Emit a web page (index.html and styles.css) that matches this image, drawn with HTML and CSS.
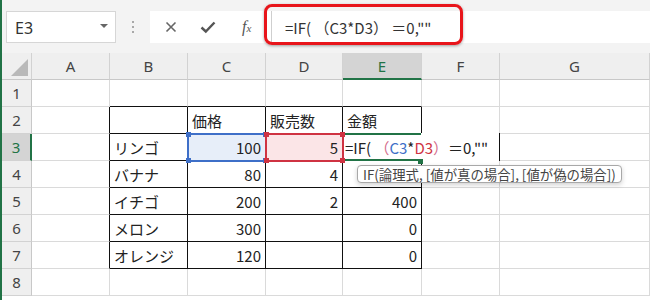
FILE: index.html
```html
<html>
<head>
	<title>IF関数</title>
	<link rel="stylesheet" href="styles.css">
</head>
<body>
	<div class="app">
		<div class="toolbar">
			<div class="namebox"><span>E3</span><i class="caret"></i></div>
			<div class="grip"><i></i><i></i><i></i></div>
			<div class="fxbar">
				<div class="fxbtns">
					<svg class="ico" width="14" height="14" viewBox="0 0 14 14"><path d="M2.5 2.5 L11.5 11.5 M11.5 2.5 L2.5 11.5" stroke="#666" stroke-width="1.6" fill="none"/></svg>
					<svg class="ico" width="16" height="14" viewBox="0 0 16 14"><path d="M1.5 7.5 L5.8 11.5 L14.5 2.5" stroke="#555" stroke-width="2.4" fill="none"/></svg>
					<span class="fx">f<span>x</span></span>
				</div>
				<div class="formula">
					<span class="mark"></span>
					<span class="ftext">=IF( （C3*D3） ＝0,""</span>
				</div>
			</div>
		</div>

		<div class="sheet">
			<div class="hd corner"><i></i></div>
			<div class="hd">A</div>
			<div class="hd">B</div>
			<div class="hd">C</div>
			<div class="hd">D</div>
			<div class="hd sel-col">E</div>
			<div class="hd">F</div>
			<div class="hd">G</div>

			<div class="rh">1</div>
			<div class="c"></div>
			<div class="c bb"></div>
			<div class="c bb"></div>
			<div class="c bb"></div>
			<div class="c bb"></div>
			<div class="c"></div>
			<div class="c"></div>

			<div class="rh">2</div>
			<div class="c br"></div>
			<div class="c bx"></div>
			<div class="c bx">価格</div>
			<div class="c bx">販売数</div>
			<div class="c bx">金額</div>
			<div class="c"></div>
			<div class="c"></div>

			<div class="rh sel-row">3</div>
			<div class="c br"></div>
			<div class="c bx">リンゴ</div>
			<div class="c bx num ref-blue">100<span class="hl blue"><i class="tl"></i><i class="tr"></i><i class="bl"></i><i class="br2"></i></span></div>
			<div class="c bx num ref-red">5<span class="hl red"><i class="tl"></i><i class="tr"></i><i class="bl"></i><i class="br2"></i></span></div>
			<div class="c bx">
				<div class="edit"><span class="p">=IF( </span><span class="paren">（</span><span class="cb">C3</span>*<span class="cr">D3</span><span class="paren">）</span> ＝0,""</div>
				<div class="tip">IF(論理式, [値が真の場合], [値が偽の場合])</div>
			</div>
			<div class="c"></div>
			<div class="c"></div>

			<div class="rh">4</div>
			<div class="c br"></div>
			<div class="c bx">バナナ</div>
			<div class="c bx num">80</div>
			<div class="c bx num">4</div>
			<div class="c bx num"></div>
			<div class="c"></div>
			<div class="c"></div>

			<div class="rh">5</div>
			<div class="c br"></div>
			<div class="c bx">イチゴ</div>
			<div class="c bx num">200</div>
			<div class="c bx num">2</div>
			<div class="c bx num">400</div>
			<div class="c"></div>
			<div class="c"></div>

			<div class="rh">6</div>
			<div class="c br"></div>
			<div class="c bx">メロン</div>
			<div class="c bx num">300</div>
			<div class="c bx num"></div>
			<div class="c bx num">0</div>
			<div class="c"></div>
			<div class="c"></div>

			<div class="rh">7</div>
			<div class="c br"></div>
			<div class="c bx">オレンジ</div>
			<div class="c bx num">120</div>
			<div class="c bx num"></div>
			<div class="c bx num">0</div>
			<div class="c"></div>
			<div class="c"></div>

			<div class="rh">8</div>
			<div class="c"></div>
			<div class="c"></div>
			<div class="c"></div>
			<div class="c"></div>
			<div class="c"></div>
			<div class="c"></div>
			<div class="c"></div>
		</div>
	</div>
</body>
</html>
```

FILE: styles.css
```css
body {
	margin: 0;
	width: 650px;
	height: 300px;
	overflow: hidden;
	background: #fff;
	font-family: "Noto Sans", "Noto Sans CJK JP", sans-serif;
}

.app {
	border-left: 2px solid #217346;
	height: 300px;
}

/* formula bar */
.toolbar {
	height: 53px;
	box-sizing: border-box;
	padding-top: 11px;
	background: #f3f3f3;
	display: flex;
	align-items: flex-start;
}

.namebox {
	margin-left: 4px;
	width: 110px;
	height: 32px;
	box-sizing: border-box;
	background: #fff;
	border: 1px solid #d6d6d6;
	display: flex;
	align-items: center;
	justify-content: space-between;
	padding: 2px 7px 0 8px;
	font-size: 16px;
	color: #333;
}

.caret {
	width: 0;
	height: 0;
	border-left: 4px solid transparent;
	border-right: 4px solid transparent;
	border-top: 4px solid #666;
	margin-bottom: 4px;
}

.grip {
	width: 34px;
	height: 32px;
	display: flex;
	flex-direction: column;
	align-items: center;
	justify-content: center;
	gap: 3px;
}

.grip i {
	width: 2px;
	height: 2px;
	background: #a8a8a8;
}

.fxbar {
	flex: 1;
	height: 32px;
	background: #fff;
	display: flex;
}

.fxbtns {
	width: 115px;
	display: flex;
	align-items: center;
	padding-left: 14px;
	gap: 22px;
	box-sizing: border-box;
}

.fx {
	font-family: "Liberation Serif", serif;
	font-style: italic;
	font-size: 16px;
	color: #555;
	margin-left: 4px;
}

.fx span {
	font-size: 11px;
}

.formula {
	position: relative;
	flex: 1;
	border-left: 1px solid #cfcfcf;
	margin-left: 6px;
	padding-left: 13px;
	display: flex;
	align-items: center;
	font-family: "Noto Sans CJK JP", sans-serif;
	font-size: 15px;
	color: #333;
}

.mark {
	position: absolute;
	left: -8px;
	top: -7px;
	width: 199px;
	height: 41px;
	box-sizing: border-box;
	border: 3px solid #e8151b;
	border-radius: 8px;
	box-shadow: 0 1px 3px rgba(0, 0, 0, 0.35);
}

/* sheet */
.sheet {
	display: grid;
	grid-template-columns: 30px 78px 78px 78px 77px 79px 78px 1fr;
	grid-auto-rows: 27px;
	font-family: "Noto Sans CJK JP", sans-serif;
	font-size: 15px;
	color: #222;
}

.sheet > div {
	box-sizing: border-box;
	border-right: 1px solid #dadada;
	border-bottom: 1px solid #dadada;
	display: flex;
	align-items: center;
	white-space: nowrap;
}

.hd {
	background: #efefef;
	justify-content: center;
	font-family: "Noto Sans", sans-serif;
	color: #444;
	border-right-color: #d2d2d2 !important;
	border-bottom-color: #c8c8c8 !important;
}

.corner {
	position: relative;
}

.corner i {
	position: absolute;
	right: 3px;
	bottom: 3px;
	width: 0;
	height: 0;
	border-left: 17px solid transparent;
	border-bottom: 17px solid #b9b9b9;
}

.sel-col {
	background: #d4d4d4;
	color: #217346;
	border-bottom: 2px solid #217346 !important;
}

.rh {
	background: #efefef;
	justify-content: center;
	font-family: "Noto Sans", sans-serif;
	color: #444;
	border-right-color: #c8c8c8 !important;
	border-bottom-color: #d2d2d2 !important;
}

.sel-row {
	background: #d4d4d4;
	color: #217346;
	border-right: 2px solid #217346 !important;
}

.c {
	padding: 1px 4px 0 4px;
}

.num {
	justify-content: flex-end;
}

.bx {
	border-right-color: #111 !important;
	border-bottom-color: #111 !important;
}

.br {
	border-right-color: #111 !important;
}

.bb {
	border-bottom-color: #111 !important;
}

/* range references while editing */
.ref-blue {
	position: relative;
	background: #e7eef9;
}

.ref-red {
	position: relative;
	background: #fbe5e7;
}

.hl {
	position: absolute;
	left: -1px;
	top: -1px;
	right: -2px;
	bottom: -2px;
	border: 2px solid;
	z-index: 2;
}

.hl.blue {
	border-color: #3e6fc8;
}

.hl.red {
	border-color: #cf3342;
	z-index: 3;
}

.hl i {
	position: absolute;
	width: 5px;
	height: 5px;
}

.hl.blue i {
	background: #3e6fc8;
}

.hl.red i {
	background: #cf3342;
}

.hl .tl { left: -3px; top: -3px; }
.hl .tr { right: -3px; top: -3px; }
.hl .bl { left: -3px; bottom: -3px; }
.hl .br2 { right: -3px; bottom: -3px; }

.bx:has(.edit) {
	position: relative;
}

.edit {
	position: absolute;
	left: -1px;
	top: -1px;
	width: 158px;
	height: 28px;
	box-sizing: border-box;
	padding: 1px 0 0 3px;
	background: #fff;
	display: flex;
	align-items: center;
	font-size: 15px;
	color: #222;
	border-right: 1px solid #111;
	z-index: 2;
}

.edit::before {
	content: "";
	position: absolute;
	left: 0;
	top: 0;
	width: 79px;
	height: 28px;
	box-sizing: border-box;
	border: 2px solid #217346;
	border-right: none;
}

.edit::after {
	content: "";
	position: absolute;
	left: 76px;
	bottom: -3px;
	width: 5px;
	height: 5px;
	background: #217346;
}

.p {
	white-space: pre;
}

.paren {
	color: #d36a8b;
}

.cb {
	color: #3e6fc8;
}

.cr {
	color: #cf3342;
}

.tip {
	position: absolute;
	left: 14px;
	top: 31px;
	height: 18px;
	box-sizing: border-box;
	padding: 0 5px;
	background: #fff;
	border: 1px solid #a8a8a8;
	border-radius: 4px;
	box-shadow: 0 2px 5px rgba(0, 0, 0, 0.18);
	font-size: 13.4px;
	line-height: 16px;
	color: #444;
	z-index: 4;
}
```
